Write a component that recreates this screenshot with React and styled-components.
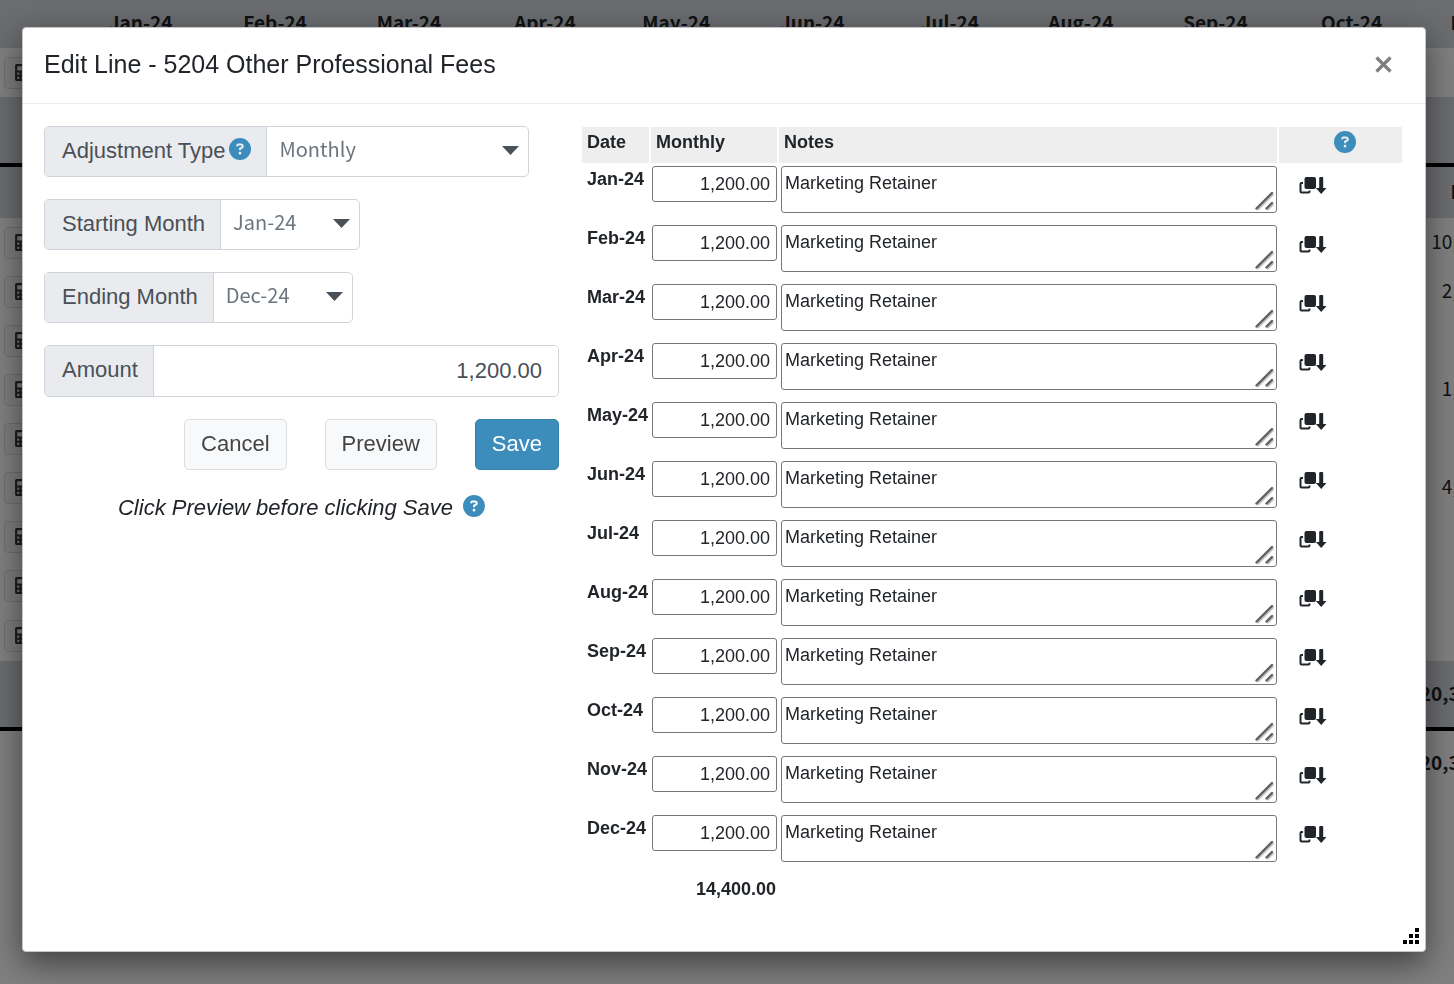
import React, { useState } from 'react';
import styled, { createGlobalStyle } from 'styled-components';
import { FaCalculator } from 'react-icons/fa';
import { FaCircleQuestion } from 'react-icons/fa6';

const GlobalStyle = createGlobalStyle`
  *, *::before, *::after {
    box-sizing: border-box;
  }

  html, body {
    margin: 0;
    height: 100%;
    overflow: hidden;
  }

  body {
    background-color: #ffffff;
    color: #212529;
    font-family: 'Liberation Sans', Arial, sans-serif;
  }
`;

const Page = styled.div`
  overflow: hidden;
`;

const BudgetTable = styled.table`
  width: 105%;
  table-layout: fixed;
  border-collapse: collapse;
  font-family: 'Noto Sans CJK SC', sans-serif;
  font-size: 19px;
  line-height: 24px;
`;

const BudgetRow = styled.tr`
  height: ${(props) => props.$height || 49}px;
  background-color: ${(props) => (props.$shaded ? '#d6d8df' : 'transparent')};
  border-bottom: ${(props) => (props.$ruled ? '4px solid #000000' : 'none')};
`;

const BudgetCell = styled.td`
  padding: ${(props) => (props.$bold ? '0 16px 2px 0' : '0 11px 4px 0')};
  text-align: right;
  font-weight: ${(props) => (props.$bold ? 700 : 400)};
  white-space: nowrap;
`;

const BudgetHead = styled.th`
  padding: 0 10px 4px 0;
  text-align: right;
  white-space: nowrap;
`;

const ActionCell = styled.td`
  width: 48px;
  padding: 0 0 0 4px;
`;

const CalcButton = styled.button`
  display: flex;
  align-items: center;
  width: 40px;
  height: 32px;
  padding: 0 0 0 9px;
  border: 1px solid #dddddd;
  border-radius: 4px;
  background-color: #f8f9fa;
  color: #343a40;
  font-size: 17px;
`;

const Backdrop = styled.div`
  position: fixed;
  inset: 0;
  display: flex;
  padding: 27px 28px 32px 22px;
  background-color: rgba(0, 0, 0, 0.5);
`;

const Modal = styled.div`
  position: relative;
  display: flex;
  flex: 1;
  flex-direction: column;
  min-width: 0;
  border: 1px solid #c4c4c4;
  border-radius: 4px;
  background-color: #ffffff;
  box-shadow: 0 11px 32px rgba(0, 0, 0, 0.5);
`;

const ModalHeader = styled.div`
  display: flex;
  align-items: center;
  justify-content: space-between;
  height: 76px;
  padding: 0 27px 3px 21px;
  border-bottom: 1px solid #e9ecef;
`;

const ModalTitle = styled.h4`
  margin: 0;
  font-size: 25px;
  font-weight: 400;
  line-height: 36px;
`;

const CloseButton = styled.button`
  display: flex;
  padding: 6px;
  border: none;
  background: none;
  color: #7f7f7f;
  cursor: pointer;
`;

const ModalBody = styled.div`
  display: grid;
  grid-template-columns: 515px minmax(0, 1fr);
  align-items: start;
  gap: 21px;
  padding: 22px 21px 0 21px;
`;

const Form = styled.form`
  display: flex;
  flex-direction: column;
  align-items: flex-start;
  gap: 22px;
`;

const InputGroup = styled.div`
  display: flex;
  width: ${(props) => (props.$wide ? '100%' : 'auto')};
  height: ${(props) => (props.$wide ? 52 : 51)}px;
  border: 1px solid #ced4da;
  border-radius: 5px;
  background-color: #ffffff;
  overflow: hidden;
`;

const GroupLabel = styled.div`
  display: flex;
  align-items: center;
  gap: 4px;
  padding: 0 15px 2px 17px;
  border-right: 1px solid #ced4da;
  background-color: #e9ebef;
  color: #495057;
  font-size: 22px;
  white-space: nowrap;
`;

const SelectWrapper = styled.div`
  position: relative;
  width: ${(props) => (props.$wide ? 261 : 138)}px;
`;

const Select = styled.select`
  width: 100%;
  height: 100%;
  padding: 0 36px 6px 12px;
  border: none;
  appearance: none;
  background: transparent;
  color: #6c757d;
  font-family: 'Noto Sans CJK SC', sans-serif;
  font-size: 20px;
`;

const Caret = styled.svg`
  position: absolute;
  top: 19px;
  right: 9px;
  pointer-events: none;
`;

const AmountInput = styled.input`
  flex: 1;
  min-width: 0;
  padding: 0 16px 1px;
  border: none;
  color: #495057;
  font-family: inherit;
  font-size: 22px;
  text-align: right;
`;

const ButtonRow = styled.div`
  display: flex;
  align-self: flex-end;
  gap: 38px;
`;

const Button = styled.button`
  height: 51px;
  padding: 0 16px 2px;
  border: 1px solid ${(props) => (props.$primary ? '#367fa9' : '#dddddd')};
  border-radius: 5px;
  background-color: ${(props) => (props.$primary ? '#3c8dbc' : '#f8f9fa')};
  color: ${(props) => (props.$primary ? '#ffffff' : '#444444')};
  font-family: inherit;
  font-size: 22px;
  cursor: pointer;
`;

const Hint = styled.p`
  display: flex;
  align-items: center;
  align-self: center;
  gap: 10px;
  margin: 0;
  font-size: 22px;
  font-style: italic;
  line-height: 32px;
`;

const HelpButton = styled.button`
  display: inline-flex;
  padding: 0 0 4px;
  border: none;
  background: none;
  color: #3c8dbc;
  font-size: 22px;
  cursor: pointer;
`;

const LinesTable = styled.table`
  width: 100%;
  table-layout: fixed;
  border-spacing: 2px;
  margin-top: -1px;
  font-size: 18px;
`;

const LinesHead = styled.th`
  width: ${(props) => props.$width || 'auto'};
  height: 36px;
  padding: ${(props) => (props.$help ? '4px 0 4px 8px' : '4px 5px')};
  background-color: #eeeeee;
  line-height: 22px;
  text-align: ${(props) => (props.$help ? 'center' : 'left')};
  vertical-align: top;
`;

const LinesRow = styled.tr`
  height: 57px;
`;

const DateCell = styled.th`
  padding: 2px 0 0 5px;
  line-height: 24px;
  text-align: left;
  vertical-align: top;
  white-space: nowrap;
`;

const FieldCell = styled.td`
  padding: 1px 0 0 ${(props) => props.$indent || 1}px;
  vertical-align: top;
`;

const ActionsCell = styled.td`
  padding: 12px 0 0 20px;
  vertical-align: top;
`;

const TotalCell = styled.td`
  padding: 4px 1px 0 0;
  font-weight: 700;
  line-height: 24px;
  text-align: right;
`;

const LineInput = styled.input`
  display: block;
  width: 100%;
  height: 36px;
  padding: 0 6px;
  border: 1px solid #767676;
  border-radius: 3px;
  color: #212529;
  font-family: inherit;
  font-size: 18px;
  text-align: right;
`;

const NotesWrapper = styled.div`
  position: relative;
`;

const Notes = styled.textarea`
  display: block;
  width: 100%;
  height: 47px;
  padding: 5px 3px;
  border: 1px solid #767676;
  border-radius: 3px;
  color: #212529;
  font-family: inherit;
  font-size: 18px;
  line-height: 22px;
  resize: none;
  overflow: hidden;
`;

const NotesGrip = styled.svg`
  position: absolute;
  right: 2px;
  bottom: 2px;
  pointer-events: none;
`;

const CopyButton = styled.button`
  display: flex;
  padding: 0;
  border: none;
  background: none;
  color: #212529;
  cursor: pointer;
`;

const ModalGrip = styled.svg`
  position: absolute;
  right: 6px;
  bottom: 7px;
`;

const MONTHS = [
  'Jan-24', 'Feb-24', 'Mar-24', 'Apr-24', 'May-24', 'Jun-24',
  'Jul-24', 'Aug-24', 'Sep-24', 'Oct-24', 'Nov-24', 'Dec-24',
];

const BUDGET_MONTHS = MONTHS.slice(0, 11);

const BUDGET_VALUES = ['10,250.00', '2,400.00', '', '1,200.00', '', '4,500.00', '', '', ''];

function Help({ label }) {
  return (
    <HelpButton type="button" aria-label={label}>
      <FaCircleQuestion />
    </HelpButton>
  );
}

function MonthHeadings() {
  return BUDGET_MONTHS.map((month) => <BudgetHead key={month}>{month}</BudgetHead>);
}

function BudgetLine({ value, bold, action, ...row }) {
  return (
    <BudgetRow {...row}>
      <ActionCell>
        {action && (
          <CalcButton type="button" aria-label="Edit line">
            <FaCalculator />
          </CalcButton>
        )}
      </ActionCell>
      <td colSpan={10} />
      <BudgetCell $bold={bold}>{value}</BudgetCell>
    </BudgetRow>
  );
}

function Budget() {
  return (
    <Page>
      <BudgetTable>
        <tbody>
          <BudgetRow $shaded $height={48}>
            <ActionCell />
            <MonthHeadings />
          </BudgetRow>
          <BudgetLine action />
          <BudgetLine $shaded $ruled $height={68} />
          <BudgetRow $shaded $height={53}>
            <ActionCell />
            <MonthHeadings />
          </BudgetRow>
          {BUDGET_VALUES.map((value, index) => (
            <BudgetLine
              key={index}
              value={value}
              action
              $height={index === BUDGET_VALUES.length - 1 ? 51 : 49}
            />
          ))}
          <BudgetLine $shaded $ruled $height={68} value="20,350.00" bold />
          <BudgetLine $height={66} value="20,350.00" bold />
        </tbody>
      </BudgetTable>
    </Page>
  );
}

function SelectGroup({ id, label, options, value, onChange, wide, help }) {
  return (
    <InputGroup>
      <GroupLabel>
        <label htmlFor={id}>{label}</label>
        {help && <Help label={`About ${label}`} />}
      </GroupLabel>
      <SelectWrapper $wide={wide}>
        <Select id={id} value={value} onChange={(e) => onChange(e.target.value)}>
          {options.map((option) => (
            <option key={option}>{option}</option>
          ))}
        </Select>
        <Caret width="17" height="9" viewBox="0 0 17 9">
          <path d="M0 0h17L8.500 9z" fill="#495057" />
        </Caret>
      </SelectWrapper>
    </InputGroup>
  );
}

function CopyDownIcon() {
  return (
    <svg width="28" height="17" viewBox="0 0 28 17" fill="currentColor">
      <path
        d="M4 6H2.500q-1 0-1 1v7.500q0 1 1 1h7q1 0 1-1V13.500"
        fill="none"
        stroke="currentColor"
        strokeWidth="2"
      />
      <rect x="5.500" y="0" width="11.500" height="12" rx="2" />
      <path d="M20.200 1q0-1 1-1h2q1 0 1 1v10h3.300l-5.300 6-5.300-6h3.300z" />
    </svg>
  );
}

function LineRow({ month, amount, notes, onChange }) {
  return (
    <LinesRow>
      <DateCell scope="row">{month}</DateCell>
      <FieldCell>
        <LineInput
          aria-label={`${month} amount`}
          value={amount}
          onChange={(e) => onChange({ amount: e.target.value })}
        />
      </FieldCell>
      <FieldCell $indent={2}>
        <NotesWrapper>
          <Notes
            aria-label={`${month} notes`}
            value={notes}
            onChange={(e) => onChange({ notes: e.target.value })}
          />
          <NotesGrip width="20" height="20" viewBox="0 0 20 20" strokeLinecap="round" strokeWidth="2">
            <path d="M3 18.500L18 3.500M13 18.500l5-5" stroke="#c4c4c4" />
            <path d="M1.500 17.500L17 2M11.500 17.500l5.500-5.500" stroke="#5f5f5f" strokeWidth="2.400" />
          </NotesGrip>
        </NotesWrapper>
      </FieldCell>
      <ActionsCell>
        <CopyButton type="button" aria-label={`Copy ${month} down`}>
          <CopyDownIcon />
        </CopyButton>
      </ActionsCell>
    </LinesRow>
  );
}

function App() {
  const [type, setType] = useState('Monthly');
  const [start, setStart] = useState('Jan-24');
  const [end, setEnd] = useState('Dec-24');
  const [amount, setAmount] = useState('1,200.00');
  const [lines, setLines] = useState(
    MONTHS.map((month) => ({ month, amount: '1,200.00', notes: 'Marketing Retainer' }))
  );

  const updateLine = (month, changes) => {
    setLines(lines.map((line) => (line.month === month ? { ...line, ...changes } : line)));
  };

  const total = lines
    .reduce((sum, line) => sum + (parseFloat(line.amount.replace(/,/g, '')) || 0), 0)
    .toLocaleString('en-US', { minimumFractionDigits: 2, maximumFractionDigits: 2 });

  return (
    <>
      <GlobalStyle />
      <Budget />
      <Backdrop>
        <Modal role="dialog" aria-labelledby="modal-title">
          <ModalHeader>
            <ModalTitle id="modal-title">Edit Line - 5204 Other Professional Fees</ModalTitle>
            <CloseButton type="button" aria-label="Close">
              <svg width="17" height="17" viewBox="0 0 17 17">
                <path d="M1.500 1.500l14 14M15.500 1.500l-14 14" stroke="currentColor" strokeWidth="3.200" />
              </svg>
            </CloseButton>
          </ModalHeader>
          <ModalBody>
            <Form onSubmit={(e) => e.preventDefault()}>
              <SelectGroup
                id="type"
                label="Adjustment Type"
                options={['Monthly', 'Annual']}
                value={type}
                onChange={setType}
                wide
                help
              />
              <SelectGroup id="start" label="Starting Month" options={MONTHS} value={start} onChange={setStart} />
              <SelectGroup id="end" label="Ending Month" options={MONTHS} value={end} onChange={setEnd} />
              <InputGroup $wide>
                <GroupLabel>
                  <label htmlFor="amount">Amount</label>
                </GroupLabel>
                <AmountInput id="amount" value={amount} onChange={(e) => setAmount(e.target.value)} />
              </InputGroup>
              <ButtonRow>
                <Button type="button">Cancel</Button>
                <Button type="button">Preview</Button>
                <Button type="submit" $primary>Save</Button>
              </ButtonRow>
              <Hint>
                Click Preview before clicking Save
                <Help label="About Preview" />
              </Hint>
            </Form>
            <LinesTable>
              <thead>
                <tr>
                  <LinesHead $width="67px">Date</LinesHead>
                  <LinesHead $width="126px">Monthly</LinesHead>
                  <LinesHead>Notes</LinesHead>
                  <LinesHead $width="123px" $help>
                    <Help label="About copying lines" />
                  </LinesHead>
                </tr>
              </thead>
              <tbody>
                {lines.map((line) => (
                  <LineRow key={line.month} {...line} onChange={(changes) => updateLine(line.month, changes)} />
                ))}
              </tbody>
              <tfoot>
                <tr>
                  <td />
                  <TotalCell>{total}</TotalCell>
                </tr>
              </tfoot>
            </LinesTable>
          </ModalBody>
          <ModalGrip width="16" height="16" viewBox="0 0 16 16">
            <path d="M12 0h4v4h-4zM6 6h4v4H6zM12 6h4v4h-4zM0 12h4v4H0zM6 12h4v4H6zM12 12h4v4h-4z" />
          </ModalGrip>
        </Modal>
      </Backdrop>
    </>
  );
}

export default App;
